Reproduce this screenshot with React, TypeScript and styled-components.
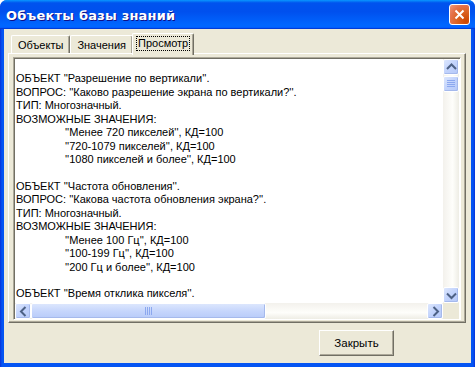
import React from "react";
import styled, { createGlobalStyle } from "styled-components";

const Global = createGlobalStyle`
  html, body { margin: 0; padding: 0; background: #ffffff; }
  body { font-family: "Liberation Sans", Arial, sans-serif; }
`;

const Window = styled.div`
  width: 475px;
  height: 367px;
  display: flex;
  flex-direction: column;
  border-radius: 7px 7px 0 0;
  overflow: hidden;
  background: linear-gradient(90deg, #0831d9 0px, #0454f3 2px, #0454f3 calc(100% - 2px), #0831d9 100%);
`;

const TitleBar = styled.div`
  height: 29px;
  flex: none;
  display: flex;
  align-items: center;
  padding: 0 5px 0 6px;
  background: linear-gradient(
    180deg,
    #0997ff 0%,
    #0053ee 10%,
    #0050ee 40%,
    #0066ff 85%,
    #0066ff 92%,
    #005bff 95%,
    #003dd7 97%,
    #003dd7 100%
  );
`;

const Title = styled.div`
  flex: 1;
  color: #ffffff;
  font-family: "DejaVu Sans", "Liberation Sans", sans-serif;
  font-weight: bold;
  font-size: 13px;
  letter-spacing: 0.2px;
  text-shadow: 1px 1px 0 #0f1089;
  padding-top: 1px;
`;

const CloseButton = styled.div`
  width: 21px;
  height: 21px;
  flex: none;
  box-sizing: border-box;
  border: 1px solid #ffffff;
  border-radius: 3px;
  background: radial-gradient(circle at 85% 85%, #cc4600 0%, #dc6527 45%, #e5724b 70%, #f09a7b 100%);
  display: flex;
  align-items: center;
  justify-content: center;
`;

const Body = styled.div`
  flex: 1;
  margin: 0 4px 4px 4px;
  background: #ece9d8;
  display: flex;
  flex-direction: column;
  padding: 4px 5px 0 4px;
  font-family: "Liberation Sans", Arial, sans-serif;
  font-size: 11px;
  color: #000000;
`;

const TabStrip = styled.div`
  height: 20px;
  display: flex;
  align-items: flex-end;
  padding-left: 3px;
  position: relative;
  z-index: 1;
`;

const Tab = styled.div<{ $active?: boolean }>`
  box-sizing: border-box;
  height: ${(p) => (p.$active ? "22px" : "18px")};
  margin-bottom: ${(p) => (p.$active ? "-2px" : "0")};
  margin-left: ${(p) => (p.$active ? "-1px" : "0")};
  padding: ${(p) => (p.$active ? "2px 3px 0 3px" : "2px 4px 0 4px")};
  background: #ece9d8;
  border-top: 1px solid #ffffff;
  border-left: 1px solid #ffffff;
  border-right: 1px solid #716f64;
  box-shadow: inset -1px 0 0 #aca899;
  border-radius: 2px 2px 0 0;
  display: flex;
  align-items: flex-start;
  white-space: nowrap;
  font-size: 11px;
`;

const TabLabel = styled.span<{ $focus?: boolean }>`
  padding: 0 1px;
  border: 1px ${(p) => (p.$focus ? "dotted #000" : "solid transparent")};
  line-height: 13px;
`;

const Panel = styled.div`
  height: 270px;
  box-sizing: border-box;
  border-top: 1px solid #ffffff;
  border-left: 1px solid #ffffff;
  border-right: 1px solid #716f64;
  border-bottom: 1px solid #716f64;
  box-shadow: inset -1px -1px 0 #aca899;
  padding: 3px 4px 2px 4px;
  display: flex;
`;

const TextBox = styled.div`
  flex: 1;
  box-sizing: border-box;
  border-top: 1px solid #aca899;
  border-left: 1px solid #aca899;
  border-right: 1px solid #ffffff;
  border-bottom: 1px solid #ffffff;
  box-shadow: inset 1px 1px 0 #716f64;
  padding: 1px 1px 0 1px;
  background: #ffffff;
  display: grid;
  grid-template-columns: 1fr 16px;
  grid-template-rows: 1fr 16px;
  overflow: hidden;
`;

const Content = styled.div`
  padding: 0 0 0 1px;
  overflow: hidden;
  font-family: "Liberation Sans", Arial, sans-serif;
  font-size: 11px;
  line-height: 13.45px;
  white-space: pre;
`;

const Line = styled.div<{ $indent?: boolean }>`
  height: 13.45px;
  padding-left: ${(p) => (p.$indent ? "49px" : "0")};
`;

const VTrack = styled.div`
  display: flex;
  flex-direction: column;
  background: linear-gradient(90deg, #f3f1ec 0%, #fefefb 60%, #eeede5 100%);
`;

const HTrack = styled.div`
  display: flex;
  background: linear-gradient(180deg, #f3f1ec 0%, #fefefb 60%, #eeede5 100%);
`;

const Corner = styled.div`
  background: #ece9d8;
`;

const SButton = styled.div`
  width: 16px;
  height: 16px;
  box-sizing: border-box;
  flex: none;
  border: 1px solid #ffffff;
  border-radius: 2px;
  background: linear-gradient(135deg, #dce6fd 0%, #c2d3fc 50%, #b6c9f8 100%);
  box-shadow: inset -1px -1px 0 #a5b9ec;
  display: flex;
  align-items: center;
  justify-content: center;
`;

const VThumb = styled(SButton)`
  height: 16px;
  margin-top: 1px;
`;

const HThumb = styled.div`
  width: 235px;
  height: 16px;
  box-sizing: border-box;
  border: 1px solid #ffffff;
  border-radius: 2px;
  background: linear-gradient(180deg, #dce6fd 0%, #c6d6fc 50%, #b8cbf9 100%);
  box-shadow: inset -1px -1px 0 #a5b9ec;
  display: flex;
  align-items: center;
  justify-content: center;
`;

const Spacer = styled.div`
  flex: 1;
`;

const Footer = styled.div`
  flex: 1;
  display: flex;
  justify-content: flex-end;
  align-items: flex-start;
  padding: 7px 72px 0 0;
`;

const PushButton = styled.div`
  width: 75px;
  height: 26px;
  box-sizing: border-box;
  border-top: 1px solid #ffffff;
  border-left: 1px solid #ffffff;
  border-right: 1px solid #716f64;
  border-bottom: 1px solid #716f64;
  box-shadow: inset -1px -1px 0 #aca899;
  background: #ece9d8;
  display: flex;
  align-items: center;
  justify-content: center;
  font-size: 11.5px;
  padding-bottom: 1px;
`;

const Arrow = ({ dir }: { dir: "up" | "down" | "left" | "right" }) => {
  const paths: Record<string, string> = {
    up: "M3 9 L7.5 4.5 L12 9",
    down: "M3 5.5 L7.5 10 L12 5.5",
    left: "M9.5 3 L5 7.5 L9.5 12",
    right: "M5.5 3 L10 7.5 L5.5 12",
  };
  return (
    <svg width="14" height="14" viewBox="0 0 14 14">
      <path d={paths[dir]} fill="none" stroke="#4d6185" strokeWidth="2" />
    </svg>
  );
};

const VGrip = () => (
  <svg width="8" height="8" viewBox="0 0 8 8">
    {[0.5, 2.5, 4.5, 6.5].map((y) => (
      <line key={y} x1="0" x2="8" y1={y} y2={y} stroke="#8ca8ef" strokeWidth="1" />
    ))}
  </svg>
);

const HGrip = () => (
  <svg width="8" height="8" viewBox="0 0 8 8">
    {[0.5, 2.5, 4.5, 6.5].map((x) => (
      <line key={x} y1="0" y2="8" x1={x} x2={x} stroke="#8ca8ef" strokeWidth="1" />
    ))}
  </svg>
);

const lines: { t: string; i?: boolean }[] = [
  { t: "" },
  { t: "ОБЪЕКТ ''Разрешение по вертикали''." },
  { t: "ВОПРОС: ''Каково разрешение экрана по вертикали?''." },
  { t: "ТИП: Многозначный." },
  { t: "ВОЗМОЖНЫЕ ЗНАЧЕНИЯ:" },
  { t: "''Менее 720 пикселей'', КД=100", i: true },
  { t: "''720-1079 пикселей'', КД=100", i: true },
  { t: "''1080 пикселей и более'', КД=100", i: true },
  { t: "" },
  { t: "ОБЪЕКТ ''Частота обновления''." },
  { t: "ВОПРОС: ''Какова частота обновления экрана?''." },
  { t: "ТИП: Многозначный." },
  { t: "ВОЗМОЖНЫЕ ЗНАЧЕНИЯ:" },
  { t: "''Менее 100 Гц'', КД=100", i: true },
  { t: "''100-199 Гц'', КД=100", i: true },
  { t: "''200 Гц и более'', КД=100", i: true },
  { t: "" },
  { t: "ОБЪЕКТ ''Время отклика пикселя''." },
];

export default function App() {
  return (
    <>
      <Global />
      <Window>
        <TitleBar>
          <Title>Объекты базы знаний</Title>
          <CloseButton>
            <svg width="11" height="11" viewBox="0 0 11 11">
              <path d="M1.5 1.5 L9.5 9.5 M9.5 1.5 L1.5 9.5" stroke="#ffffff" strokeWidth="2" />
            </svg>
          </CloseButton>
        </TitleBar>
        <Body>
          <TabStrip>
            <Tab>
              <TabLabel>Объекты</TabLabel>
            </Tab>
            <Tab>
              <TabLabel>Значения</TabLabel>
            </Tab>
            <Tab $active>
              <TabLabel $focus>Просмотр</TabLabel>
            </Tab>
          </TabStrip>
          <Panel>
            <TextBox>
              <Content>
                {lines.map((l, k) => (
                  <Line key={k} $indent={l.i}>
                    {l.t}
                  </Line>
                ))}
              </Content>
              <VTrack>
                <SButton>
                  <Arrow dir="up" />
                </SButton>
                <VThumb>
                  <VGrip />
                </VThumb>
                <Spacer />
                <SButton>
                  <Arrow dir="down" />
                </SButton>
              </VTrack>
              <HTrack>
                <SButton>
                  <Arrow dir="left" />
                </SButton>
                <HThumb>
                  <HGrip />
                </HThumb>
                <Spacer />
                <SButton>
                  <Arrow dir="right" />
                </SButton>
              </HTrack>
              <Corner />
            </TextBox>
          </Panel>
          <Footer>
            <PushButton>Закрыть</PushButton>
          </Footer>
        </Body>
      </Window>
    </>
  );
}
